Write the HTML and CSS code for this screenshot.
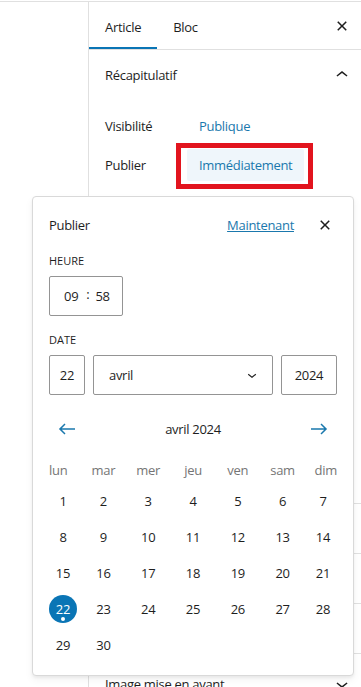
FILE: index.html
```html
<!DOCTYPE html>
<html lang="fr">
<head>
    <meta charset="UTF-8">
    <meta name="viewport" content="width=device-width, initial-scale=1.0">
    <title>Publier</title>
    <link rel="stylesheet" href="styles.css">
</head>
<body>
    <div class="editor">
        <div class="canvas"></div>

        <aside class="sidebar">
            <div class="tabs">
                <button class="tab active">Article</button>
                <button class="tab">Bloc</button>
                <button class="icon-btn tabs-close" aria-label="Fermer les réglages">
                    <svg viewBox="0 0 24 24"><path d="M12 13.06l3.712 3.713 1.061-1.06L13.061 12l3.712-3.712-1.06-1.06L12 10.938 8.288 7.227l-1.061 1.06L10.939 12l-3.712 3.712 1.06 1.061L12 13.061z"/></svg>
                </button>
            </div>

            <div class="panel summary">
                <div class="panel-head">
                    <span>Récapitulatif</span>
                    <svg viewBox="0 0 24 24"><path d="M6.5 12.4L12 8l5.5 4.4-.9 1.2L12 10l-4.6 3.6-1-1.2z"/></svg>
                </div>
                <div class="panel-body">
                    <div class="row">
                        <span class="row-label">Visibilité</span>
                        <button class="row-value">Publique</button>
                    </div>
                    <div class="row">
                        <span class="row-label">Publier</span>
                        <button class="row-value is-open">Immédiatement</button>
                    </div>
                </div>
            </div>

            <!-- panels hidden behind the popover -->
            <div class="panel"><div class="panel-head"></div></div>
            <div class="panel"><div class="panel-head"></div></div>
            <div class="panel"><div class="panel-head"></div></div>
            <div class="panel featured">
                <div class="panel-head">
                    <span>Image mise en avant</span>
                    <svg viewBox="0 0 24 24"><path d="M17.5 11.6L12 16l-5.5-4.4.9-1.2L12 14l4.6-3.6 1 1.2z"/></svg>
                </div>
            </div>
        </aside>
    </div>

    <!-- Date picker popover opened from "Immédiatement" -->
    <div class="popover">
        <div class="popover-head">
            <h2>Publier</h2>
            <a href="#" class="now-link">Maintenant</a>
            <button class="icon-btn" aria-label="Fermer">
                <svg viewBox="0 0 24 24"><path d="M12 13.06l3.712 3.713 1.061-1.06L13.061 12l3.712-3.712-1.06-1.06L12 10.938 8.288 7.227l-1.061 1.06L10.939 12l-3.712 3.712 1.06 1.061L12 13.061z"/></svg>
            </button>
        </div>

        <div class="field">
            <div class="field-label">Heure</div>
            <div class="time-input">
                <span>09</span>
                <span class="colon">:</span>
                <span>58</span>
            </div>
        </div>

        <div class="field">
            <div class="field-label">Date</div>
            <div class="date-inputs">
                <div class="input day-input">22</div>
                <div class="input month-input">
                    <span>avril</span>
                    <svg viewBox="0 0 24 24"><path d="M17.5 11.6L12 16l-5.5-4.4.9-1.2L12 14l4.6-3.6 1 1.2z"/></svg>
                </div>
                <div class="input year-input">2024</div>
            </div>
        </div>

        <div class="calendar-nav">
            <button class="icon-btn nav-btn" aria-label="Voir le mois précédent">
                <svg viewBox="0 0 24 24"><path d="M20 11.2H6.8l3.7-3.7-1-1L3.9 12l5.6 5.5 1-1-3.7-3.7H20z"/></svg>
            </button>
            <div class="month-title"><strong>avril</strong> 2024</div>
            <button class="icon-btn nav-btn" aria-label="Voir le mois suivant">
                <svg viewBox="0 0 24 24"><path d="M14.5 6.5l-1 1 3.7 3.7H4v1.6h13.2l-3.7 3.7 1 1 5.6-5.5z"/></svg>
            </button>
        </div>

        <div class="calendar">
            <div class="weekday">lun</div>
            <div class="weekday">mar</div>
            <div class="weekday">mer</div>
            <div class="weekday">jeu</div>
            <div class="weekday">ven</div>
            <div class="weekday">sam</div>
            <div class="weekday">dim</div>

            <button class="day">1</button>
            <button class="day">2</button>
            <button class="day">3</button>
            <button class="day">4</button>
            <button class="day">5</button>
            <button class="day">6</button>
            <button class="day">7</button>
            <button class="day">8</button>
            <button class="day">9</button>
            <button class="day">10</button>
            <button class="day">11</button>
            <button class="day">12</button>
            <button class="day">13</button>
            <button class="day">14</button>
            <button class="day">15</button>
            <button class="day">16</button>
            <button class="day">17</button>
            <button class="day">18</button>
            <button class="day">19</button>
            <button class="day">20</button>
            <button class="day">21</button>
            <button class="day selected">22</button>
            <button class="day">23</button>
            <button class="day">24</button>
            <button class="day">25</button>
            <button class="day">26</button>
            <button class="day">27</button>
            <button class="day">28</button>
            <button class="day">29</button>
            <button class="day">30</button>
        </div>
    </div>
</body>
</html>
```

FILE: styles.css
```css
* {
    box-sizing: border-box;
}

body {
    margin: 0;
    height: 687px;
    overflow: hidden;
    font-family: "Open Sans", "Noto Sans", Arial, sans-serif;
    font-size: 13px;
    letter-spacing: -0.3px;
    color: #1e1e1e;
    background-color: #fff;
}

button {
    font-family: inherit;
    font-size: inherit;
    letter-spacing: inherit;
    color: inherit;
    background: none;
    border: 0;
    padding: 0;
    cursor: pointer;
}

svg {
    fill: currentColor;
}

.editor {
    display: flex;
    height: 686px;
    margin-top: 1px;
    border-top: 1px solid #e0e0e0;
}

.canvas {
    width: 88px;
    flex-shrink: 0;
}

.sidebar {
    flex: 1;
    border-left: 1px solid #e0e0e0;
}

.icon-btn {
    display: flex;
    align-items: center;
    justify-content: center;
    width: 24px;
    height: 24px;
}

.icon-btn svg {
    width: 24px;
    height: 24px;
}

/* tabs */
.tabs {
    display: flex;
    align-items: center;
    height: 48px;
    border-bottom: 1px solid #e0e0e0;
}

.tab {
    height: 47px;
    padding: 2px 16px 0;
    font-weight: 500;
    align-self: flex-start;
}

.tab.active {
    box-shadow: inset 0 -2px 0 #0a75b5;
}

.tabs-close {
    margin-left: auto;
    margin-right: 7px;
}

/* panels */
.panel {
    border-top: 1px solid #e0e0e0;
}

.panel.summary {
    border-top: 0;
}

.panel-head {
    display: flex;
    align-items: center;
    justify-content: space-between;
    height: 49px;
    padding: 0 7px 0 16px;
    font-weight: 500;
}

.panel-head svg {
    width: 24px;
    height: 24px;
}

.panel.featured {
    padding-top: 5px;
}

.summary .panel-body {
    height: 404px;
    padding: 11px 16px 0;
}

.row {
    display: flex;
    align-items: center;
    min-height: 32px;
    margin-bottom: 7px;
}

.row-label {
    width: 82px;
    flex-shrink: 0;
}

.row-value {
    height: 32px;
    padding: 0 12px;
    color: #1a78ad;
    border-radius: 2px;
}

.row-value.is-open {
    position: relative;
    background-color: #eff6fb;
}

.row-value.is-open::after {
    content: "";
    position: absolute;
    top: -6px;
    right: -9px;
    bottom: -8px;
    left: -11px;
    border: 5px solid #e2141e;
}

/* popover */
.popover {
    position: absolute;
    top: 196px;
    left: 32px;
    width: 322px;
    padding: 16px;
    background-color: #fff;
    border: 1px solid #d9d9d9;
    border-radius: 4px;
    box-shadow: 0 2px 3px rgba(0, 0, 0, 0.05), 0 4px 8px rgba(0, 0, 0, 0.05);
}

.popover-head {
    display: flex;
    align-items: center;
    height: 24px;
}

.popover-head h2 {
    flex: 1;
    margin: 0;
    font-size: 13px;
    font-weight: 500;
}

.now-link {
    margin-right: 19px;
    color: #1a78ad;
    text-decoration: underline;
}

.field {
    margin-top: 16px;
}

.field-label {
    font-size: 11px;
    font-weight: 500;
    line-height: 15px;
    letter-spacing: 0;
    text-transform: uppercase;
    margin-bottom: 8px;
}

.time-input {
    display: flex;
    align-items: center;
    width: 74px;
    height: 40px;
    padding-left: 14px;
    border: 1px solid #949494;
    border-radius: 2px;
}

.time-input .colon {
    margin: -4px 6px 0 8px;
}

.date-inputs {
    display: flex;
    gap: 8px;
}

.input {
    display: flex;
    align-items: center;
    height: 40px;
    border: 1px solid #949494;
    border-radius: 2px;
}

.day-input {
    width: 36px;
    justify-content: center;
}

.month-input {
    flex: 1;
    justify-content: space-between;
    padding: 0 11px 0 15px;
}

.month-input svg {
    width: 18px;
    height: 18px;
}

.year-input {
    width: 56px;
    justify-content: center;
}

/* calendar */
.calendar-nav {
    display: flex;
    align-items: center;
    justify-content: space-between;
    height: 36px;
    margin-top: 16px;
}

.nav-btn {
    width: 36px;
    height: 36px;
    color: #1a78ad;
}

.month-title strong {
    font-weight: 500;
}

.calendar {
    display: grid;
    grid-template-columns: 0.5fr repeat(5, 1fr) 0.5fr;
    column-gap: 8px;
    row-gap: 8px;
    justify-items: center;
    align-items: center;
    margin-top: 14px;
}

.calendar > :nth-child(7n+1) {
    justify-self: start;
}

.calendar > :nth-child(7n) {
    justify-self: end;
}

.weekday {
    color: #757575;
    line-height: 18px;
}

.day {
    position: relative;
    display: flex;
    align-items: center;
    justify-content: center;
    width: 28px;
    height: 28px;
    border-radius: 50%;
}

.day.selected {
    background-color: #0a75b5;
    color: #fff;
}

.day.selected::before {
    content: "";
    position: absolute;
    bottom: 2px;
    left: 50%;
    width: 4px;
    height: 4px;
    margin-left: -2px;
    border-radius: 2px;
    background-color: #fff;
}
```
